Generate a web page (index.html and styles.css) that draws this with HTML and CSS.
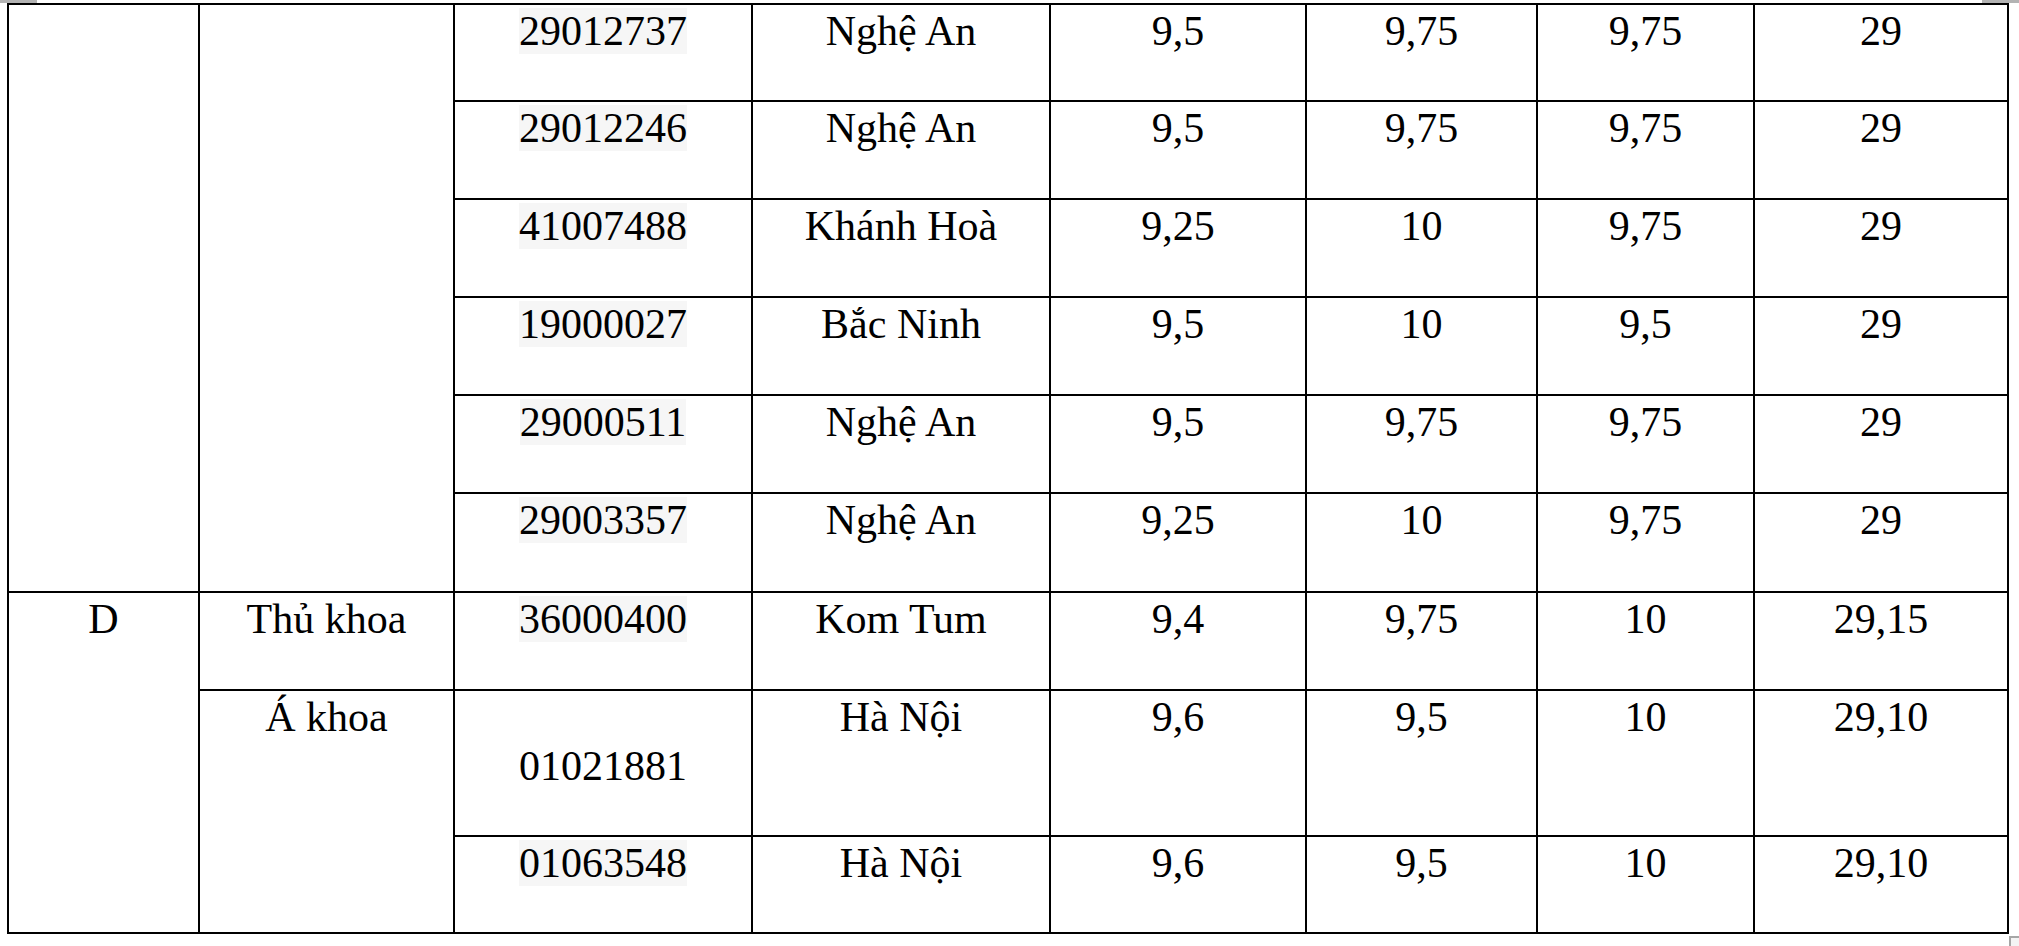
FILE: index.html
```html
<!DOCTYPE html>
<html lang="vi">
<head>
<meta charset="utf-8">
<title>Bảng điểm</title>
<link rel="stylesheet" href="styles.css">
</head>
<body>
<div class="page">
  <div class="topbar">
    <div class="handle"></div>
    <div class="handle"></div>
  </div>
  <table class="scores">
    <colgroup>
      <col class="c1"><col class="c2"><col class="c3"><col class="c4">
      <col class="c5"><col class="c6"><col class="c7"><col class="c8">
    </colgroup>
    <tbody>
      <tr class="row first">
        <td rowspan="6"></td>
        <td rowspan="6"></td>
        <td><span class="hl">29012737</span></td>
        <td>Nghệ An</td><td>9,5</td><td>9,75</td><td>9,75</td><td>29</td>
      </tr>
      <tr class="row">
        <td><span class="hl">29012246</span></td>
        <td>Nghệ An</td><td>9,5</td><td>9,75</td><td>9,75</td><td>29</td>
      </tr>
      <tr class="row">
        <td><span class="hl">41007488</span></td>
        <td>Khánh Hoà</td><td>9,25</td><td>10</td><td>9,75</td><td>29</td>
      </tr>
      <tr class="row">
        <td><span class="hl">19000027</span></td>
        <td>Bắc Ninh</td><td>9,5</td><td>10</td><td>9,5</td><td>29</td>
      </tr>
      <tr class="row">
        <td><span class="hl">29000511</span></td>
        <td>Nghệ An</td><td>9,5</td><td>9,75</td><td>9,75</td><td>29</td>
      </tr>
      <tr class="row wide">
        <td><span class="hl">29003357</span></td>
        <td>Nghệ An</td><td>9,25</td><td>10</td><td>9,75</td><td>29</td>
      </tr>
      <tr class="row">
        <td rowspan="3">D</td>
        <td>Thủ khoa</td>
        <td><span class="hl">36000400</span></td>
        <td>Kom Tum</td><td>9,4</td><td>9,75</td><td>10</td><td>29,15</td>
      </tr>
      <tr class="row tall">
        <td rowspan="2">Á khoa</td>
        <td class="mid">01021881</td>
        <td>Hà Nội</td><td>9,6</td><td>9,5</td><td>10</td><td>29,10</td>
      </tr>
      <tr class="row last">
        <td><span class="hl">01063548</span></td>
        <td>Hà Nội</td><td>9,6</td><td>9,5</td><td>10</td><td>29,10</td>
      </tr>
    </tbody>
  </table>
  <div class="bottombar">
    <div class="resize"></div>
  </div>
</div>
</body>
</html>
```

FILE: styles.css
```css
html, body {
  margin: 0;
  padding: 0;
  background: #ffffff;
}

body {
  width: 2019px;
  height: 946px;
  overflow: hidden;
  font-family: "Liberation Serif", "Times New Roman", serif;
  color: #000000;
}

.page {
  display: flex;
  flex-direction: column;
}

.topbar {
  display: flex;
  justify-content: space-between;
  height: 3px;
}

.handle {
  width: 37px;
  height: 3px;
  background: #b3b3b3;
}

.scores {
  margin-left: 7px;
  width: 2002px;
  table-layout: fixed;
  border-collapse: collapse;
  border: 2px solid #000000;
  font-size: 42px;
  line-height: normal;
}

.c1 { width: 191px; }
.c2 { width: 255px; }
.c3 { width: 298px; }
.c4 { width: 298px; }
.c5 { width: 256px; }
.c6 { width: 231px; }
.c7 { width: 217px; }
.c8 { width: 254px; }

.scores td {
  border: 2px solid #000000;
  padding: 2px 0 0 0;
  text-align: center;
  vertical-align: top;
  white-space: nowrap;
}

.row { height: 98px; }
.row.first { height: 97px; }
.row.wide { height: 99px; }
.row.tall { height: 146px; }
.row.last { height: 97px; }

.scores td.mid {
  vertical-align: middle;
  padding-top: 6px;
}

.hl {
  background: #f6f6f6;
}

.bottombar {
  display: flex;
  justify-content: flex-end;
  margin-top: 2px;
}

.resize {
  width: 8px;
  height: 8px;
  border: 2px solid #a6a6a6;
  border-right: none;
  border-bottom: none;
  background: #f4f4f4;
}
```
